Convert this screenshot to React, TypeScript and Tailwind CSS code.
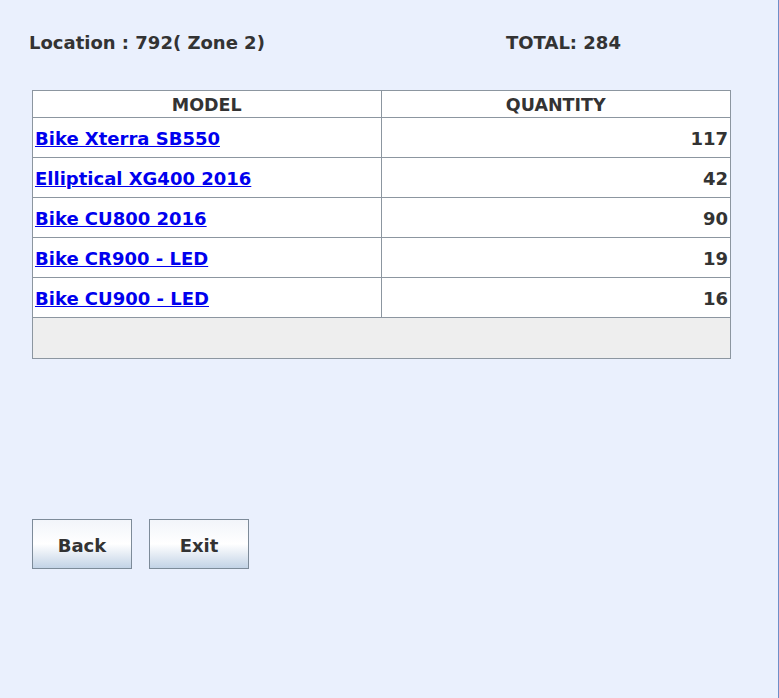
const rows = [
  { model: 'Bike Xterra SB550', qty: 117 },
  { model: 'Elliptical XG400 2016', qty: 42 },
  { model: 'Bike CU800 2016', qty: 90 },
  { model: 'Bike CR900 - LED', qty: 19 },
  { model: 'Bike CU900 - LED', qty: 16 },
];

export default function App() {
  return (
    <main
      className="h-[698px] w-[779px] border-r border-[#6f8fc8] bg-[#eaf0fd] text-[#333333]"
      style={{ fontFamily: '"DejaVu Sans", Verdana, sans-serif' }}
    >
      <div className="flex px-[29px] pt-[32px] text-[18px] font-bold leading-[22px]">
        <p className="w-[477px]">Location : 792( Zone 2)</p>
        <p>TOTAL: 284</p>
      </div>

      <div className="ml-[32px] mt-[36px] w-[699px] border border-[#8c96a0]">
        <table className="w-full border-collapse bg-white">
          <thead>
            <tr className="h-[26px]">
              <th className="w-[348px] border-r border-b border-[#8c96a0] pt-[2px] text-center text-[17.5px] font-bold leading-[24px]">
                MODEL
              </th>
              <th className="border-b border-[#8c96a0] pt-[2px] text-center text-[17.5px] font-bold leading-[24px]">
                QUANTITY
              </th>
            </tr>
          </thead>
          <tbody>
            {rows.map((r) => (
              <tr key={r.model} className="h-[40px]">
                <td className="border-r border-b border-[#8c96a0] px-[2px] pt-[1px] text-[18px] font-bold">
                  <a href="#" className="text-[#0000ee] underline">
                    {r.model}
                  </a>
                </td>
                <td className="border-b border-[#8c96a0] px-[2px] pt-[1px] text-right text-[18px] font-bold">
                  {r.qty}
                </td>
              </tr>
            ))}
          </tbody>
        </table>
        <div className="h-[40px] bg-[#eeeeee]" />
      </div>

      <div className="ml-[32px] mt-[160px] flex gap-[17px]">
        {['Back', 'Exit'].map((b) => (
          <button
            key={b}
            className="h-[50px] w-[100px] border border-[#7d8b99] bg-gradient-to-b from-[#f2f5fa] via-white to-[#c3d3e6] pt-[2px] text-[18px] font-bold text-[#333333]"
          >
            {b}
          </button>
        ))}
      </div>
    </main>
  );
}
